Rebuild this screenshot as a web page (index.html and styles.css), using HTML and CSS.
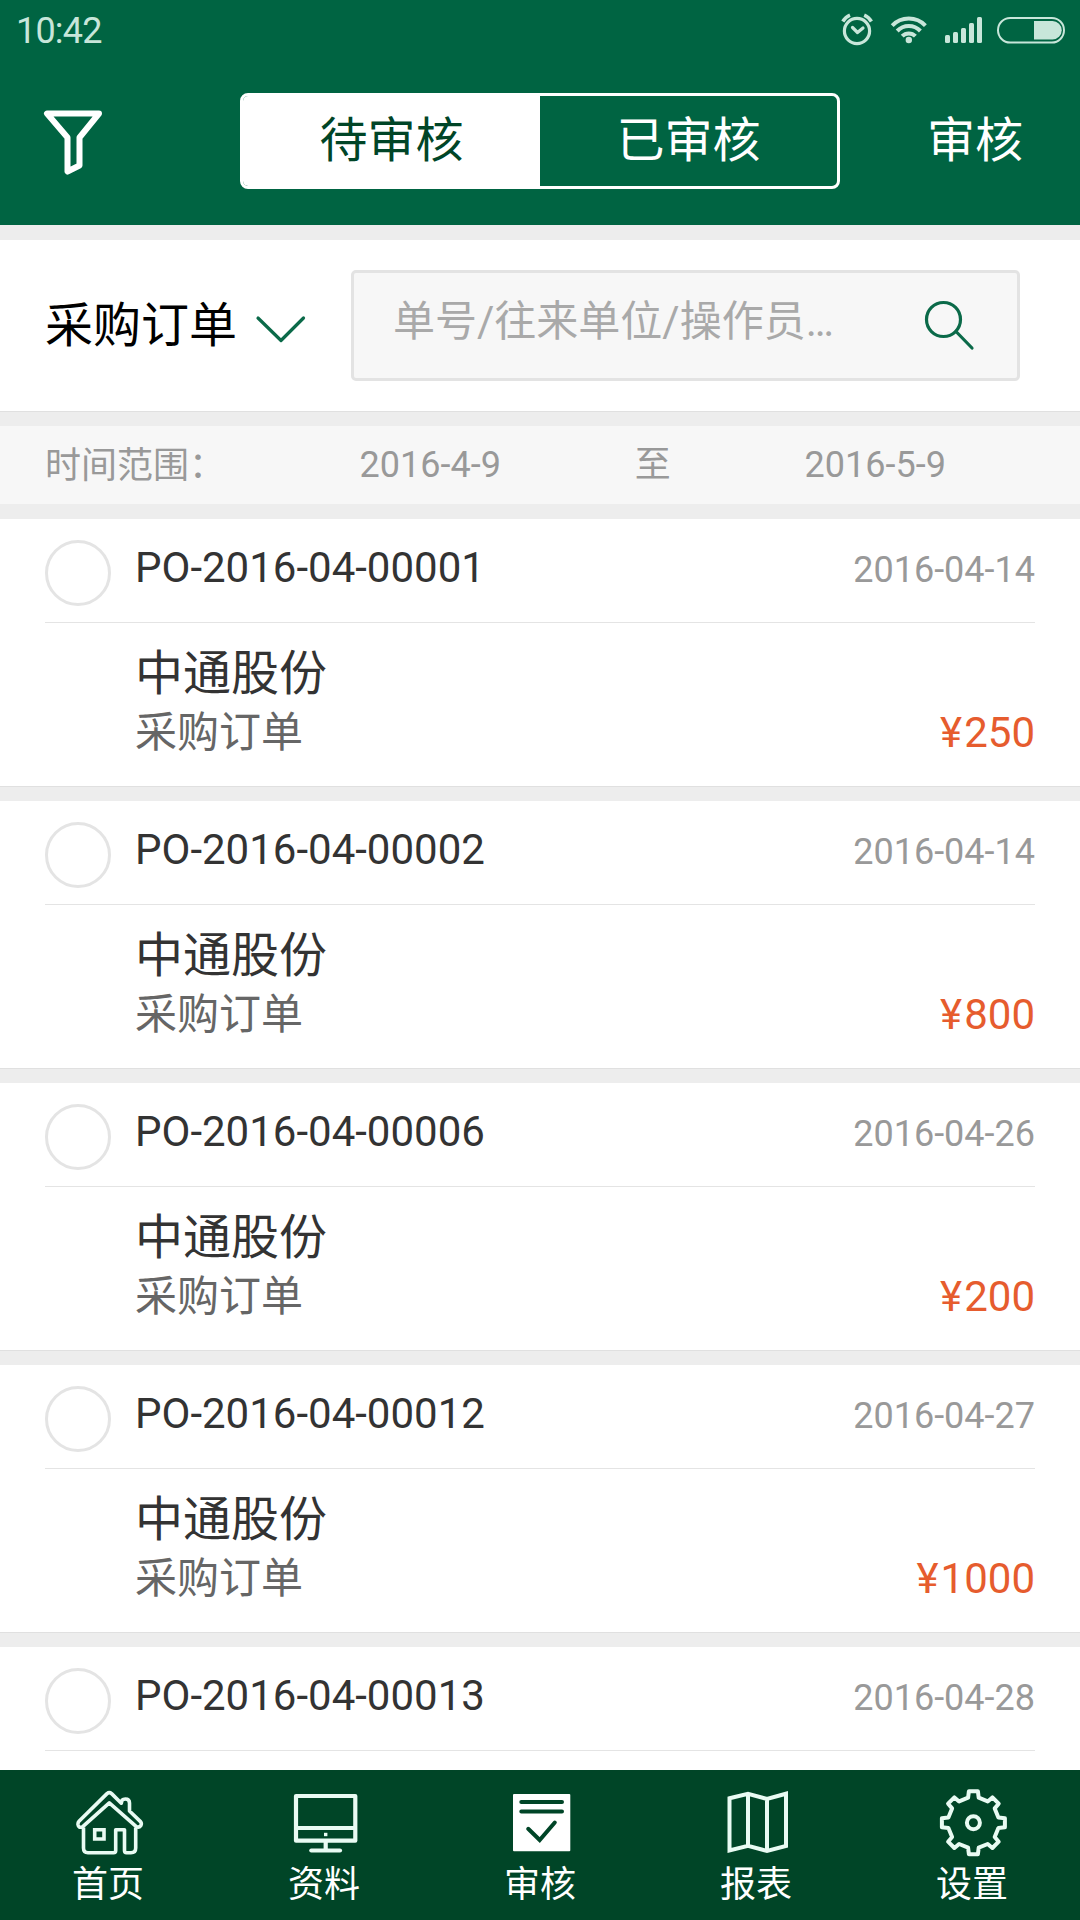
FILE: index.html
```html
<!DOCTYPE html>
<html lang="zh-CN">
<head>
<meta charset="utf-8">
<title>审核</title>
<link rel="stylesheet" href="styles.css">
</head>
<body>
<div class="app">
  <header class="header">
    <div class="status">
      <span class="clock">10:42</span>
      <svg class="status-icons" viewBox="836 10 232 40" fill="none" stroke="currentColor">
        <g stroke-width="3.200" stroke-linecap="round" stroke-linejoin="round">
          <circle cx="857" cy="31" r="12.600"/>
          <path d="M852.500 27.500l5 5 5.500-4.500"/>
          <path d="M842.800 21.500q2.800-4.500 7.200-6.300M871.400 21.500q-2.800-4.500-7.200-6.300" stroke-width="3.600" stroke-linecap="butt"/>
        </g>
        <g stroke-width="4">
          <path d="M892.200 25.600a23 23 0 0 1 33.200 0"/>
          <path d="M897.200 31a16 16 0 0 1 23.200 0"/>
          <path d="M902.200 36.200a9.200 9.200 0 0 1 13.200 0"/>
        </g>
        <g fill="currentColor" stroke="none">
          <circle cx="908.800" cy="40" r="3.200"/>
          <rect x="945" y="35" width="5" height="8" rx="1.500"/>
          <rect x="953" y="32" width="5" height="11" rx="1.500"/>
          <rect x="961" y="28" width="5" height="15" rx="1.500"/>
          <rect x="969" y="23" width="5" height="20" rx="1.500"/>
          <rect x="977" y="17" width="5" height="26" rx="1.500"/>
          <path d="M1034 21h18.500a9.200 9.200 0 0 1 0 18.400H1034z"/>
        </g>
        <rect x="998" y="18" width="66" height="24.500" rx="12.200" stroke-width="2"/>
      </svg>
    </div>
    <div class="toolbar">
      <svg class="filter" viewBox="0 0 66 72" fill="none" stroke="#fff" stroke-width="6" stroke-linejoin="round">
        <path d="M7 8.500H59L39.500 32.500V60.500L27.500 66.500V32.500z"/>
      </svg>
      <nav class="segmented">
        <a class="segment segment-active">待审核</a>
        <a class="segment">已审核</a>
      </nav>
      <a class="action">审核</a>
    </div>
  </header>

  <section class="search">
    <span class="doc-type">采购订单</span>
    <svg class="chevron" viewBox="0 0 52 32" fill="none" stroke="#0b6a49" stroke-width="3.200" stroke-linecap="round" stroke-linejoin="round">
      <path d="M3 4L26 26.500 48.500 4"/>
    </svg>
    <div class="search-box">
      <span class="placeholder">单号/往来单位/操作员…</span>
      <svg class="magnifier" viewBox="0 0 54 54" fill="none" stroke="#0b6a49" stroke-width="3.200" stroke-linecap="round">
        <circle cx="21.500" cy="20.500" r="17"/>
        <path d="M34 32.500L50 49"/>
      </svg>
    </div>
  </section>

  <section class="range">
    <span class="range-label">时间范围：</span>
    <span>2016-4-9</span>
    <span>至</span>
    <span>2016-5-9</span>
  </section>

  <main class="orders">
    <article class="order">
      <div class="order-head"><i class="check"></i><span class="number">PO-2016-04-00001</span><time class="date">2016-04-14</time></div>
      <div class="order-body"><div class="company">中通股份</div><div class="line"><span>采购订单</span><span class="amount"><span class="currency">¥</span>250</span></div></div>
    </article>
    <article class="order">
      <div class="order-head"><i class="check"></i><span class="number">PO-2016-04-00002</span><time class="date">2016-04-14</time></div>
      <div class="order-body"><div class="company">中通股份</div><div class="line"><span>采购订单</span><span class="amount"><span class="currency">¥</span>800</span></div></div>
    </article>
    <article class="order">
      <div class="order-head"><i class="check"></i><span class="number">PO-2016-04-00006</span><time class="date">2016-04-26</time></div>
      <div class="order-body"><div class="company">中通股份</div><div class="line"><span>采购订单</span><span class="amount"><span class="currency">¥</span>200</span></div></div>
    </article>
    <article class="order">
      <div class="order-head"><i class="check"></i><span class="number">PO-2016-04-00012</span><time class="date">2016-04-27</time></div>
      <div class="order-body"><div class="company">中通股份</div><div class="line"><span>采购订单</span><span class="amount"><span class="currency">¥</span>1000</span></div></div>
    </article>
    <article class="order">
      <div class="order-head"><i class="check"></i><span class="number">PO-2016-04-00013</span><time class="date">2016-04-28</time></div>
    </article>
  </main>

  <nav class="tabs">
    <a class="tab">
      <svg class="tab-icon" viewBox="0 0 72 72" fill="none" stroke="currentColor" stroke-width="3.600" stroke-linejoin="round">
        <path d="M10.500 39.800Q6.500 41.500 6 37.500 5.800 35.500 7 34.300L35 6.600Q37.300 4.700 39.600 6.600L49.300 16.200Q49.300 12 53.300 12 57.500 12 57.500 16V24L68.500 34.600Q70 36.500 68.800 38.600 67 41 64.300 39.600L37.300 15.800z"/>
        <path d="M11.500 40.500V61Q11.500 65.700 16 65.700H41.500Q43.700 65.700 43.700 63.500V42.700H52.500V63.500Q52.500 65.700 54.500 65.700H59Q63.700 65.700 63.700 61V40.500"/>
        <path d="M22.700 42.700H32V52H22.700z" stroke-linejoin="miter"/>
      </svg>
      <span>首页</span>
    </a>
    <a class="tab">
      <svg class="tab-icon" viewBox="0 0 72 72" fill="none" stroke="currentColor" stroke-width="4.200" stroke-linejoin="round">
        <path d="M8 9H67.300V53.700H8zM8 41H67.300M37.700 54V63"/>
        <path d="M23.300 63.500H52" stroke-linecap="round"/>
        <path d="M36 47.500H39.400" stroke-width="3.400"/>
      </svg>
      <span>资料</span>
    </a>
    <a class="tab">
      <svg class="tab-icon" viewBox="0 0 72 72" fill="none" stroke="#004527" stroke-width="4" stroke-linecap="round">
        <rect x="9" y="7" width="57.300" height="57.300" rx="1" fill="#fff" stroke="none"/>
        <path d="M17.300 15H58M17.300 24.500H58M24.200 41.800L35.700 53 50.800 35.500"/>
      </svg>
      <span>审核</span>
    </a>
    <a class="tab">
      <svg class="tab-icon" viewBox="0 0 72 72" fill="none" stroke="currentColor" stroke-width="4" stroke-linejoin="miter">
        <path d="M9.500 11.300L28 6.700 47 12 66 6.700V59L47 64 28 58.700 9.500 63.500zM28 6.700V58.700M47 12V64"/>
      </svg>
      <span>报表</span>
    </a>
    <a class="tab">
      <svg class="tab-icon" viewBox="0 0 72 72" fill="none" stroke="currentColor" stroke-width="4" stroke-linejoin="round">
        <path transform="translate(37.400 35.700)" d="M-4.500-31.500H4.500L5.300-25 14.300-21.300 19-25.300 25.300-19 21.300-14.300 25-5.300 31.500-4.500V4.500L25 5.300 21.300 14.300 25.300 19 19 25.300 14.300 21.300 5.300 25 4.500 31.500H-4.500L-5.300 25-14.300 21.300-19 25.300-25.300 19-21.300 14.300-25 5.300-31.500 4.500V-4.500L-25-5.300-21.300-14.300-25.300-19-19-25.300-14.300-21.300-5.300-25z"/>
        <circle cx="37.400" cy="35.700" r="6.500"/>
      </svg>
      <span>设置</span>
    </a>
  </nav>
</div>
</body>
</html>
```
FILE: styles.css
```css
* { box-sizing: border-box; }

body {
  margin: 0;
  font-family: Roboto, "Noto Sans CJK SC", sans-serif;
  font-size: 36px;
  color: #333;
  background: #ededed;
}

.app {
  display: flex;
  flex-direction: column;
  width: 1080px;
  height: 1920px;
  overflow: hidden;
}

.header {
  flex: none;
  height: 225px;
  background: #006442;
  color: #fff;
}

.status {
  display: flex;
  justify-content: space-between;
  height: 61px;
  padding: 0 12px 0 16px;
  line-height: 62px;
  color: #c8e6da;
}

.clock { letter-spacing: -0.8px; }

.status-icons {
  width: 232px;
  height: 40px;
  margin-top: 10px;
}

.toolbar {
  display: flex;
  align-items: center;
  padding: 32px 57px 0 40px;
  font-size: 48px;
  line-height: 90px;
}

.filter {
  width: 66px;
  height: 72px;
  margin-right: 134px;
}

.segmented {
  display: flex;
  width: 600px;
  height: 96px;
  border: 3px solid #fff;
  border-radius: 8px;
  overflow: hidden;
}

.segment {
  flex: 1;
  text-align: center;
  line-height: 89px;
}

.segment-active {
  background: #fff;
  color: #004527;
}

.action {
  margin-left: auto;
  line-height: 89px;
  padding-bottom: 1px;
}

.search {
  flex: none;
  display: flex;
  align-items: center;
  height: 172px;
  margin-top: 15px;
  padding: 0 60px 0 45px;
  border-bottom: 1px solid #e0e0e0;
  background: #fff;
}

.doc-type {
  font-size: 48px;
  line-height: 60px;
  color: #000;
}

.chevron {
  width: 52px;
  height: 32px;
  margin: 8px 44px 0 18px;
}

.search-box {
  flex: 1;
  display: flex;
  justify-content: space-between;
  align-items: center;
  height: 111px;
  padding: 0 41px 0 39px;
  border: 3px solid #e3e3e3;
  border-radius: 5px;
  background: #f7f7f7;
}

.placeholder {
  font-size: 42px;
  line-height: 60px;
  padding-bottom: 7px;
  color: #a9a9a9;
}

.magnifier {
  width: 54px;
  height: 54px;
}

.range {
  flex: none;
  display: grid;
  grid-template-columns: 274px repeat(3, 222.5px);
  height: 78px;
  margin-top: 14px;
  padding-left: 45px;
  line-height: 78px;
  text-align: center;
  color: #999;
  background: #f7f7f7;
}

.range-label {
  padding-top: 1px;
  text-align: left;
}

.orders {
  flex: 1;
  min-height: 0;
  display: flex;
  flex-direction: column;
  gap: 14px;
  padding-top: 15px;
  overflow: hidden;
}

.order {
  flex: none;
  height: 268px;
  padding: 0 45px;
  border-bottom: 1px solid #e0e0e0;
  background: #fff;
}

.order-head {
  display: flex;
  align-items: baseline;
  height: 104px;
  padding-top: 21px;
  border-bottom: 1px solid #e4e4e4;
}

.check {
  align-self: flex-start;
  width: 66px;
  height: 66px;
  margin-right: 24px;
  border: 3px solid #e4e4e4;
  border-radius: 50%;
}

.number {
  font-size: 42px;
  line-height: 56px;
}

.date {
  margin-left: auto;
  color: #999;
}

.order-body { padding: 23px 0 0 90px; }

.company {
  font-size: 48px;
  line-height: 56px;
}

.line {
  display: flex;
  justify-content: space-between;
  font-size: 42px;
  line-height: 62px;
  color: #666;
}

.amount { color: #e65c2e; }

.currency { margin-right: 2px; }

.tabs {
  flex: none;
  display: grid;
  grid-template-columns: repeat(5, 1fr);
  height: 150px;
  padding-top: 17px;
  background: #004527;
  color: #fff;
}

.tab {
  display: flex;
  flex-direction: column;
  align-items: center;
  line-height: 52px;
}

.tab-icon {
  width: 72px;
  height: 72px;
  color: #e9fbf3;
}
```
